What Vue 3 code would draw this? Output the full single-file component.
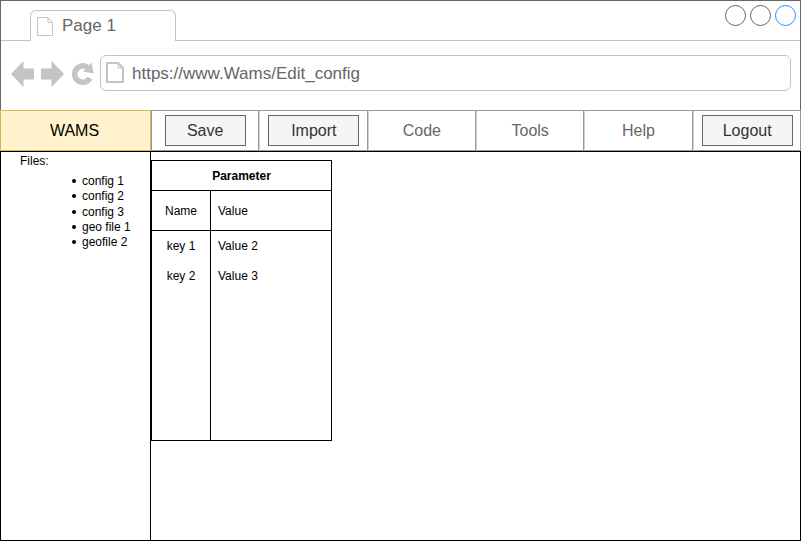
<script setup>
import { ref } from 'vue'

const url = ref('https://www.Wams/Edit_config')
const files = ['config 1', 'config 2', 'config 3', 'geo file 1', 'geofile 2']
const menu = [
  { label: 'Save', button: true },
  { label: 'Import', button: true, start: true },
  { label: 'Code' },
  { label: 'Tools' },
  { label: 'Help' },
  { label: 'Logout', button: true, start: true }
]
const params = [
  { name: 'key 1', value: 'Value 2' },
  { name: 'key 2', value: 'Value 3' }
]
</script>

<template>
  <div class="window">
    <header class="chrome">
      <div class="tabs">
        <div class="tab">
          <svg class="tab-icon" width="17" height="20" viewBox="0 0 17 20">
            <path d="M0.5 0.5H11L15.500 5.5V18.5H0.5Z M11 0.5V5.5H15.500" fill="none" stroke="#c4c4c4" />
          </svg>
          <span>Page 1</span>
        </div>
        <div class="strip">
          <button class="dot" aria-label="Minimize"></button>
          <button class="dot" aria-label="Maximize"></button>
          <button class="dot close" aria-label="Close"></button>
        </div>
      </div>
      <div class="toolbar">
        <button class="tool" aria-label="Back">
          <svg width="23" height="26" viewBox="0 0 23 26">
            <path d="M0 13L12.500 0V7.500H23V18.500H12.500V26Z" fill="#c4c4c4" />
          </svg>
        </button>
        <button class="tool forward" aria-label="Forward">
          <svg width="23" height="26" viewBox="0 0 23 26">
            <path d="M23 13L10.500 0V7.500H0V18.500H10.500V26Z" fill="#c4c4c4" />
          </svg>
        </button>
        <button class="tool reload" aria-label="Reload">
          <svg width="22" height="24" viewBox="0 0 22 24">
            <path d="M18 16.200A8.200 8.200 0 1 1 15.500 5.300" fill="none" stroke="#c4c4c4" stroke-width="5.600" />
            <path d="M19.700 0.500L21.700 11.500L11 9.500Z" fill="#c4c4c4" />
          </svg>
        </button>
        <label class="address">
          <svg width="18" height="21" viewBox="0 0 18 21">
            <path d="M1 1H12L17 6V20H1Z" fill="none" stroke="#c4c4c4" stroke-width="2" />
            <path d="M12 1V6H17" fill="none" stroke="#c4c4c4" />
          </svg>
          <input v-model="url" type="text" aria-label="Address" />
        </label>
      </div>
    </header>

    <nav class="menu">
      <div class="brand">WAMS</div>
      <div v-for="item in menu" :key="item.label" class="item" :class="{ start: item.start }">
        <button v-if="item.button" class="action" :class="{ narrow: !item.start }">{{ item.label }}</button>
        <a v-else href="#">{{ item.label }}</a>
      </div>
    </nav>

    <main class="content">
      <aside class="files">
        <div>Files:</div>
        <ul>
          <li v-for="file in files" :key="file">{{ file }}</li>
        </ul>
      </aside>
      <section class="panel">
        <table>
          <colgroup>
            <col class="name-col" />
            <col />
          </colgroup>
          <thead>
            <tr><th colspan="2">Parameter</th></tr>
            <tr class="head"><td>Name</td><td>Value</td></tr>
          </thead>
          <tbody>
            <tr v-for="p in params" :key="p.name">
              <td>{{ p.name }}</td>
              <td>{{ p.value }}</td>
            </tr>
            <tr class="rest"><td></td><td></td></tr>
          </tbody>
        </table>
      </section>
    </main>
  </div>
</template>

<style>
body {
  background: #fff;
}
</style>

<style scoped>
* {
  box-sizing: border-box;
}
.window {
  display: flex;
  flex-direction: column;
  min-height: 100vh;
  margin-right: 1px;
  font-family: "Liberation Sans", Arial, sans-serif;
  font-size: 12px;
  color: #000;
}
button {
  font-family: inherit;
  cursor: pointer;
}
.chrome {
  border: 1px solid #666;
  border-bottom: 0;
  color: #666;
  font-size: 17px;
}
.tabs {
  display: flex;
  height: 40px;
}
.tabs::before {
  content: "";
  width: 29px;
  border-bottom: 1px solid #c4c4c4;
}
.tab {
  display: flex;
  align-items: center;
  gap: 8px;
  width: 146px;
  margin-top: 9px;
  padding-left: 6px;
  border: 1px solid #c4c4c4;
  border-bottom: 0;
  border-radius: 6px 6px 0 0;
}
.tab-icon {
  margin-top: 2px;
}
.strip {
  flex: 1;
  display: flex;
  justify-content: flex-end;
  gap: 4px;
  padding: 4px 4px 0 0;
  border-bottom: 1px solid #c4c4c4;
}
.dot {
  width: 21px;
  height: 21px;
  padding: 0;
  background: #fff;
  border: 1px solid #666;
  border-radius: 50%;
}
.dot.close {
  border-color: #1e90ff;
}
.toolbar {
  display: flex;
  align-items: center;
  height: 69px;
  padding: 0 9px 6px 10px;
}
.tool {
  display: flex;
  margin-top: 3px;
  padding: 0;
  border: 0;
  background: none;
}
.forward {
  margin-left: 7px;
}
.reload {
  margin-left: 8px;
}
.address {
  flex: 1;
  display: flex;
  align-items: center;
  gap: 8px;
  height: 36px;
  margin-left: 6px;
  padding-left: 5px;
  border: 1px solid #c4c4c4;
  border-radius: 6px;
}
.address input {
  flex: 1;
  min-width: 0;
  padding: 2px 0 0;
  border: 0;
  outline: 0;
  background: none;
  font: inherit;
  color: inherit;
}
.menu {
  display: grid;
  grid-template-columns: 151px repeat(6, 1fr);
  height: 41px;
  font-size: 16px;
}
.brand {
  display: flex;
  align-items: center;
  justify-content: center;
  padding-right: 2px;
  background: #fff2cc;
  border: 1px solid #d6b656;
}
.item {
  display: flex;
  align-items: center;
  justify-content: center;
  border: 1px solid #999;
  border-left-color: #d0d0d0;
}
.brand + .item {
  border-left-color: #999;
}
.item.start {
  justify-content: flex-start;
  padding-left: 8px;
}
.item a {
  color: #666;
  text-decoration: none;
}
.action {
  width: 91px;
  height: 31px;
  padding: 0;
  background: #f5f5f5;
  border: 1px solid #666;
  font-size: 16px;
  color: #333;
}
.action.narrow {
  width: 81px;
}
.content {
  flex: 1;
  display: flex;
  border: 1px solid #000;
}
.files {
  width: 150px;
  padding: 2px 0 0 19px;
  border-right: 1px solid #000;
  line-height: 14px;
}
.files ul {
  display: flex;
  flex-direction: column;
  height: 77px;
  margin: 5px 0 0;
  padding-left: 52px;
  list-style: none;
}
.files li {
  flex: 1;
  display: flex;
  align-items: center;
  gap: 6px;
}
.files li::before {
  content: "";
  width: 4px;
  height: 4px;
  background: #000;
  border-radius: 50%;
}
.panel {
  flex: 1;
  padding-top: 8px;
}
table {
  width: 181px;
  height: 281px;
  table-layout: fixed;
  border-collapse: separate;
  border-spacing: 0;
  border: 1px solid #000;
}
.name-col {
  width: 59px;
}
th,
td {
  height: 30px;
  padding: 0;
}
th,
.head td {
  border-bottom: 1px solid #000;
}
.head td {
  height: 40px;
}
td:first-child {
  text-align: center;
  border-right: 1px solid #000;
}
td:last-child {
  padding-left: 7px;
}
.rest td {
  height: auto;
}
</style>
